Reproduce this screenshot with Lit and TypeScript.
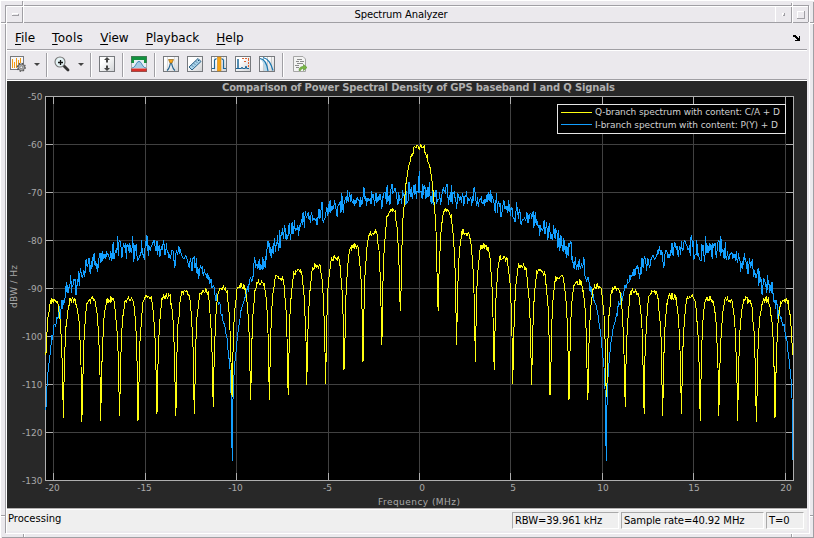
import { LitElement, html, svg, css } from "lit";
import { customElement } from "lit/decorators.js";

type Pt = [number, number];
const CX = 419.2;
const MHZ = 18.28;

// Peak heights of the C/A lobes and depth of their nulls, from the outer edge inwards.
const lobeTops = [301.5, 301, 300.5, 300, 299, 297.5, 296, 293.5, 291, 288.5, 286, 282, 277.5, 271.5, 266, 258, 247.5, 234, 210];
const nullDepths = [418, 422, 421, 416, 421, 414, 416, 414, 407, 397, 400, 400, 395, 385, 384, 370, 362, 345, 311];
const LOBE = 18.73;

// Mean level of the P(Y) spectrum, left half.
const pyLevel: Pt[] = [
  [46, 411], [47, 383], [49, 363], [50.7, 348], [53.3, 330], [55, 323], [57.3, 319], [60, 310], [62.7, 302], [65, 297],
  [68.3, 287], [73.3, 282], [76, 285], [80, 273], [88, 267], [96.7, 260], [106.7, 257], [118, 248], [133, 247],
  [138, 255], [146.7, 246], [156.7, 244], [166.7, 250], [173, 253], [183, 253], [191.7, 264], [200, 268],
  [206.7, 273], [213, 288], [220, 307], [223, 320], [226.7, 337], [229, 357], [230.5, 377], [231.3, 397], [232.2, 462],
  [233, 397], [234, 372], [236.7, 343], [239, 323], [241.7, 305], [245, 300], [247.3, 290], [250.7, 281], [256, 263],
  [262.7, 263], [266.7, 252], [273, 249], [281.7, 237], [293, 230], [303, 219], [313, 220], [320, 213], [326, 218],
  [331.7, 207], [336.7, 209], [345, 201], [356.7, 201], [363, 200], [373, 197], [380, 198], [387, 196], [393, 190],
  [401.7, 194], [411.7, 193], [417, 192], [419.2, 192],
];

function randoms(seed: number) {
  let s = seed;
  return () => {
    s = (s * 1664525 + 1013904223) >>> 0;
    return s / 4294967296;
  };
}

function interpolate(table: Pt[], x: number) {
  if (x <= table[0][0]) return table[0][1];
  for (let i = 1; i < table.length; i++) {
    const [x1, y1] = table[i];
    if (x <= x1) {
      const [x0, y0] = table[i - 1];
      return y0 + ((y1 - y0) * (x - x0)) / (x1 - x0);
    }
  }
  return table[table.length - 1][1];
}

const lobeCentres: Pt[] = lobeTops.map((y, i) => [CX - LOBE * (19.5 - i), y]);

function mirrored(half: Pt[]) {
  const right = half.slice(0, -1).reverse().map(([x, y]) => [2 * CX - x, y] as Pt);
  return [...half, ...right];
}
const toPath = (pts: Pt[]) => "M" + pts.map(([x, y]) => x.toFixed(1) + " " + y.toFixed(1)).join("L");

function caTrace() {
  const rnd = randoms(11);
  const half: Pt[] = [];
  for (let k = 511; k >= 0; k--) {
    const x = CX - k * 0.7305;
    const u = (CX - x) / LOBE;
    const noise = (rnd() - 0.5) * 7;
    if (u < 1) {
      const sinc = u < 0.01 ? 1 : Math.sin(Math.PI * u) / (Math.PI * u);
      const ripple = 6.5 * Math.exp(-u * u * 90);
      const y = 143 - 96 * Math.log10(Math.max(sinc, 1e-4)) + ripple + noise * 0.8;
      half.push([x, Math.min(y, 311)]);
    } else {
      const idx = Math.max(0, Math.min(18, 19 - Math.round(u)));
      const s = Math.max(Math.abs(Math.sin(Math.PI * u)), 1e-4);
      const drop = -96 * Math.log10(s);
      // The tops of the lobes are flatter than a pure sine.
      const flat = drop < 9 ? drop * 0.2 : drop - 7.2;
      const y = interpolate(lobeCentres, x) - 0.5 + flat + noise;
      const near = Math.abs(u - Math.round(u)) < 0.0196;
      half.push([x, near ? nullDepths[idx] : Math.min(y, nullDepths[idx] - 8)]);
    }
  }
  return toPath(mirrored(half));
}

function pyTrace() {
  const rnd = randoms(77);
  const half: Pt[] = [];
  for (let k = 511; k > 0; k--) {
    const x = CX - k * 0.7305;
    const calm = Math.min(1, Math.abs(x - 232.2) / 26 + 0.05, (x - 44) / 18);
    const r = rnd() + rnd() - 1;
    const spike = rnd() > 0.92 ? 1.4 : 1;
    half.push([x, interpolate(pyLevel, x) + r * 13 * calm * spike]);
  }
  half.push([CX, 171]);
  const pts = mirrored(half);
  pts.push([793, 460]);
  return toPath(pts);
}

const bevel = html`
  <svg class="bevel" width="814" height="538" shape-rendering="crispEdges">
    <path class="dk" d="M5.5 533V5.5H809M813.5 2V538M2 537.5H814M22.5 1V23M775.5 8V22M791.5 3V23M808.5 6V22M6 22.5H808M1 22.5H5M1 515.5H5M23.5 534V538M791.5 534V538M810 22.5H814M810 515.5H814"/>
    <path class="lt" d="M6 533.5H809.5V6M7 6.5H808M6.5 7V533M23.5 2V23M775.5 7V22M792.5 2V23M1 23.5H6M1 516.5H5M810 23.5H814M810 516.5H813M24.5 534V537M792.5 534V537M0.5 0V538M0 0.5H814"/>
    <path class="lt" d="M12 15.5V13.5H18"/><path class="dk" d="M12 15.5H18.5V14"/>
    <path class="lt" d="M782.5 16V13.5H785"/><path class="dk" d="M783 15.5H784.5V13"/>
    <path class="lt" d="M797.5 18V11.5H804"/><path class="dk" d="M797 18.5H804.5V11"/>
  </svg>`;

const frame = svg`<rect class="ibox" x=".5" y=".5" width="15" height="15"/>`;
const icon = (body: unknown) => html`<svg class="icon" width="16" height="16" viewBox="0 0 16 16">
  <defs><linearGradient id="g" x2="1" y2="1"><stop offset=".3" stop-color="#fff"/><stop offset="1" stop-color="#cfd1d4"/></linearGradient></defs>${body}</svg>`;

const icons = {
  config: icon(svg`<rect x=".5" y=".5" width="13" height="13" fill="#f7f7f9" stroke="#77797d"/>
    <path d="M2.500 3v9M4.500 6v6M6.500 2v10M8.500 4v5M10.500 2v5" stroke="#f39c12"/>
    <circle cx="11.300" cy="11.300" r="3.300" fill="#b5b5b5" stroke="#666"/>
    <circle cx="11.300" cy="11.300" r="4" fill="none" stroke="#555" stroke-width="1.200" stroke-dasharray="1.600 1.540"/>
    <circle cx="11.300" cy="11.300" r="1.400" fill="#eee" stroke="#666" stroke-width=".7"/>`),
  zoom: icon(svg`<path d="M10 10l4 4" stroke="#333" stroke-width="2.800" stroke-linecap="round"/><circle cx="6" cy="6" r="5" fill="#e4f3f5" stroke="#777" stroke-width="1.100"/>
    <path d="M6.500 4v5M4 6.500h5" stroke="#111" stroke-width="1.300"/>`),
  scale: icon(svg`${frame}<path d="M8 1L11 4H9v2.500H7V4H5zM8 15L11 12H9V9.500H7V12H5z" fill="#444"/>`),
  mask: icon(svg`<rect width="16" height="16" fill="#e6eef3"/><path d="M1 12C5 11.500 5 5.500 8 5.500s3 6 7 6.500" fill="#a6cbe3" stroke="#3984b5"/>
    <path d="M0 0h16v7h-3V4H3v3H0z" fill="#13923f"/><path d="M0 12.500h16V16H0z" fill="#d8302a"/><path d="M.5 0v16M15.500 0v16M0 .5h16M0 15.500h16" stroke="#666" stroke-opacity=".5"/>`),
  peaks: icon(svg`${frame}<path d="M4.500 1v14M11.500 1v14" stroke="#ddd"/><path d="M4 14.500C6.500 13 7 9 7.500 7M12 14.500C9.500 13 9 9 8.500 7" fill="none" stroke="#24648f" stroke-width="1.200"/>
    <path d="M5.500 3.500h5L9 7H7z" fill="#f7a51b" stroke="#8f651f" stroke-width=".7"/>`),
  ruler: icon(svg`${frame}<path d="M2 11L11 2.500L14 5.500L5 14z" fill="#a9d3ea" stroke="#2c6288"/>
    <path d="M5 9.500l1 1M7 7.500l1 1M9 5.500l1 1M11 4l1 1" stroke="#174a70"/>`),
  channel: icon(svg`${frame}<path d="M3.500 1v14M12.500 1v14" stroke="#ddd"/><path d="M1 12.500H3.500V4L5.500 2.500M15 12.500H12.500V4L10.500 2.500" fill="none" stroke="#1d6698" stroke-width="1.200"/><rect x="6.500" y="1" width="3.500" height="14" fill="#f9a514" stroke="#ca8216" stroke-width=".6"/>`),
  distortion: icon(svg`${frame}<path d="M1 13l1-1 1 1V3v9l1 1 1-1 1 1 1-2 1 2 1-1 1 1 1-3 1 3 1-1 1 1" fill="none" stroke="#1d6698"/>
    <path d="M7 2.500h7M13.500 3v8M9 5.500h3" stroke="#dc6335" stroke-dasharray="2 1"/>`),
  ccdf: icon(svg`${frame}<path d="M4.500 1v14M8.500 1v14M12.500 1v14" stroke="#ccc"/><path d="M1 2.500C6 3 8 8 9 15H5C5 9 4 5 1 3z" fill="#b9d9ea"/>
    <path d="M1 2.500C6 3 8 8 9 15M4 1.500C10 3 12 8 14 14.500" fill="none" stroke="#1876af" stroke-width="1.200"/>`),
  exportTo: icon(svg`<path d="M.5.500H10L12.500 3V15.500H.5z" fill="#f3f3f3" stroke="#a5a5a5"/><path d="M4 3.500h5M3 5.500h3M7 5.500h4M4 7.500h6M2 9.500h4M3 11.500h3" stroke="#8a8a8a"/>
    <path d="M6 14.500C6 11.500 8 10.500 10.500 10.500V8.500L14 11.500L10.500 14.500V12.500C9 12.500 8 13 7.500 14.500z" fill="#79b843" stroke="#5f9539" stroke-width=".7"/>`),
};

@customElement("app-root")
export class AppRoot extends LitElement {
  static styles = css`
    :host { display: block; }
    .window { position: relative; box-sizing: border-box; width: 814px; height: 538px; padding: 6px 7px 5px; background: #ebe9ed;
      display: flex; flex-direction: column; overflow: hidden; color: #000; font: 12px "DejaVu Sans", sans-serif; }
    .bevel { position: absolute; left: 0; top: 0; pointer-events: none; }
    .bevel path { fill: none; }
    .dk { stroke: #a09fa4; }
    .lt { stroke: #fff; }
    .title { height: 17px; flex: none; display: flex; justify-content: center; align-items: center; font-size: 10px; letter-spacing: -.13px; padding-right: 12px; }
    .menu { height: 27px; flex: none; display: flex; align-items: center; padding-left: 8px; padding-top: 3px; box-sizing: border-box; border-bottom: 1px solid #a09fa4; gap: 17px; }
    .menu u { text-underline-offset: 2px; text-decoration-thickness: 1px; }
    .menu .loose { letter-spacing: .3px; }
    .dock { margin-left: auto; margin-right: 6px; }
    .tools { height: 30px; flex: none; box-sizing: border-box; border-top: 1px solid #fff; border-bottom: 1px solid #a09fa4; display: flex; align-items: flex-start; padding: 5px 0 0 3px; }
    .icon { display: block; flex: none; margin-right: 8px; }
    .ibox { fill: url(#g); stroke: #77797d; }
    .sep { width: 1px; height: 24px; background: #a09fa4; border-right: 1px solid #fff; flex: none; margin: -3px 7px 0 -1px; }
    .sep.tight { margin-right: 6px; }
    .sep.wide { margin-right: 9px; }
    .caret { border: 3px solid transparent; border-top: 3px solid #444; border-bottom: 0; margin: 7px 7px 0 0; }
    .plot { display: block; flex: none; border-top: 1px solid #fff; }
    .status { flex: none; height: 23px; box-sizing: border-box; background: #efefef; border-top: 1px solid #b5b2b2; box-shadow: inset 0 1px #fff; display: flex; align-items: flex-start; font-size: 10px; padding: 3px 3px 0 1px; gap: 2px; }
    .msg { flex: 1; line-height: 13px; }
    .cell { box-sizing: border-box; flex: none; height: 17px; line-height: 15px; border: 1px solid; border-color: #a9a9a9 #fff #fff #a9a9a9; padding-left: 2px; letter-spacing: -.1px; white-space: nowrap; }
    .rbw { width: 107px; }
    .rate { width: 143px; }
    .time { width: 38px; }
    .plot text { font-family: "DejaVu Sans", sans-serif; font-size: 9px; fill: #a8a8a8; }
    .plot .heading { font-weight: bold; font-size: 10px; fill: #afafaf; }
    .plot .entry { fill: #d0d0d0; }
    .grid { stroke: #414141; fill: none; }
    .axis { stroke: #afafaf; fill: none; }
    .trace { fill: none; stroke-width: 1; }
    .ca { stroke: #ffff11; }
    .py { stroke: #139fff; }
  `;

  render() {
    const xs = [-20, -15, -10, -5, 0, 5, 10, 15, 20].map((v) => ({ v, x: Math.round(418.9 + v * MHZ) + 0.5 }));
    const ys = [-50, -60, -70, -80, -90, -100, -110, -120, -130].map((v, i) => ({ v, y: 96.5 + i * 48 }));
    const grid = xs.map((t) => `M${t.x} 97V480`).join("") + ys.map((t) => `M46 ${t.y}H793`).join("");
    const ticks = xs.map((t) => `M${t.x} 97v7M${t.x} 480v-7`).join("") + ys.map((t) => `M46 ${t.y}h7M793 ${t.y}h-7`).join("");
    const nudge = (v: number) => (v < 0 ? -1 : v < 10 ? 2.5 : 0.5);
    return html`<div class="window">
      <div class="title"><span class="caption">Spectrum Analyzer</span></div>
      <div class="menu">
        <span><u>F</u>ile</span><span class="loose"><u>T</u>ools</span><span><u>V</u>iew</span><span><u>P</u>layback</span><span><u>H</u>elp</span>
        <svg class="dock" width="8" height="6" shape-rendering="crispEdges"><path d="M0 0h3v1h1v1h1v1h1V1h1v5H2V5h2V4H3V3H2V2H0z"/></svg>
      </div>
      <div class="tools">
        ${icons.config}<i class="caret"></i><i class="sep tight"></i>
        ${icons.zoom}<i class="caret"></i><i class="sep"></i>
        ${icons.scale}<i class="sep"></i>${icons.mask}<i class="sep"></i>
        ${icons.peaks}${icons.ruler}${icons.channel}${icons.distortion}${icons.ccdf}<i class="sep wide"></i>${icons.exportTo}
      </div>
      <svg class="plot" width="800" height="427" viewBox="7 81 800 427">
        <rect x="7" y="81" width="800" height="427" fill="#282828"/>
        <rect x="45" y="96" width="748" height="384" fill="#000"/>
        <g shape-rendering="crispEdges">
          <path class="grid" d=${grid}/><path class="axis" d=${ticks}/>
          <rect class="axis" x="45.5" y="96.5" width="748" height="384"/>
          <path class="trace py" d=${pyTrace()}/><path class="trace ca" d=${caTrace()}/>
          <rect x="557.5" y="104.500" width="228" height="29" fill="#000" stroke="#e6e6e6"/>
          <path class="ca" d="M561 112.500H592"/><path class="py" d="M561 124.500H592"/>
        </g>
        <text class="heading" x="222" y="91" textLength="393">Comparison of Power Spectral Density of GPS baseband I and Q Signals</text>
        <text class="entry" x="595" y="115" textLength="185">Q-branch spectrum with content: C/A + D</text>
        <text class="entry" x="595" y="128" textLength="183">I-branch spectrum with content: P(Y) + D</text>
        ${xs.map((t) => svg`<text x=${t.x + nudge(t.v)} y="491" text-anchor="middle">${t.v}</text>`)}
        ${ys.map((t) => svg`<text x="42.500" y=${t.y + 3} text-anchor="end">${t.v}</text>`)}
        <text x="378" y="505" textLength="82">Frequency (MHz)</text>
        <text transform="translate(17 308) rotate(-90)" textLength="43">dBW / Hz</text>
      </svg>
      <div class="status">
        <span class="msg">Processing</span>
        <span class="cell rbw">RBW=39.961 kHz</span><span class="cell rate">Sample rate=40.92 MHz</span><span class="cell time">T=0</span>
      </div>
      ${bevel}
    </div>`;
  }
}
